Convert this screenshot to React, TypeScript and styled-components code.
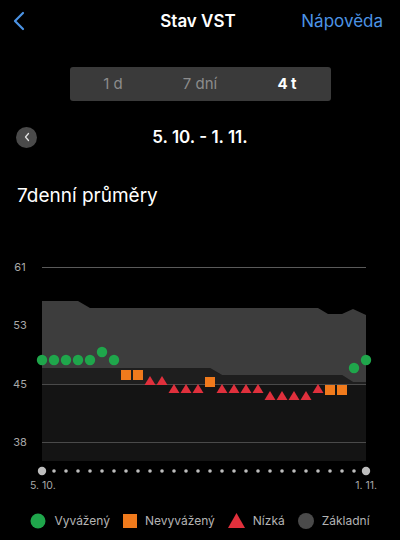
import React from "react";
import styled, { createGlobalStyle } from "styled-components";

const Global = createGlobalStyle`
  html, body { margin: 0; padding: 0; background: #000; }
  body { font-family: Inter, "Open Sans", "Liberation Sans", sans-serif; color: #fff; }
  * { box-sizing: border-box; }
`;

const Page = styled.div`
  width: 400px;
  height: 540px;
  background: #000;
  display: flex;
  flex-direction: column;
  overflow: hidden;
`;

const Header = styled.div`
  height: 44px;
  display: grid;
  grid-template-columns: 90px 1fr 90px;
  align-items: center;
  padding: 0 17px 0 13px;
`;

const BackBtn = styled.div`
  display: flex;
  align-items: center;
`;

const HeaderTitle = styled.div`
  text-align: center;
  font-size: 17px;
  font-weight: 600;
  color: #fff;
`;

const HelpLink = styled.div`
  text-align: right;
  font-size: 17px;
  color: #4c94e6;
  white-space: nowrap;
`;

const SegWrap = styled.div`
  margin-top: 24px;
  display: flex;
  justify-content: center;
`;

const Segmented = styled.div`
  width: 261px;
  height: 34px;
  background: #3a3a3a;
  border-radius: 3px;
  display: grid;
  grid-template-columns: repeat(3, 1fr);
  align-items: center;
`;

const Seg = styled.div<{ $active?: boolean }>`
  text-align: center;
  font-size: 15px;
  font-weight: ${(p) => (p.$active ? 700 : 400)};
  color: ${(p) => (p.$active ? "#fff" : "#8c8c8c")};
`;

const DateRow = styled.div`
  margin-top: 26px;
  height: 21px;
  display: grid;
  grid-template-columns: 21px 1fr 21px;
  align-items: center;
  padding: 0 16px;
`;

const RoundBtn = styled.div`
  width: 21px;
  height: 21px;
  border-radius: 50%;
  background: #4a4a4a;
  display: flex;
  align-items: center;
  justify-content: center;
`;

const DateText = styled.div`
  text-align: center;
  font-size: 17px;
  font-weight: 600;
  color: #fff;
`;

const SectionTitle = styled.div`
  margin-top: 35px;
  padding-left: 17px;
  font-size: 19px;
  line-height: 25px;
  color: #fff;
`;

const ChartBox = styled.div`
  margin-top: 41px;
  height: 250px;
`;

const Legend = styled.div`
  height: 42px;
  padding-top: 3px;
  display: flex;
  align-items: center;
  justify-content: center;
  gap: 13px;
`;

const LegendItem = styled.div`
  display: flex;
  align-items: center;
  gap: 8px;
  font-size: 12px;
  color: #b4b4b4;
`;

const GREEN = "#1fa64b";
const ORANGE = "#f07a1c";
const RED = "#e0303c";
const OFF = 250;

type Kind = "g" | "o" | "t";
const points: [Kind, number][] = [
  ["g", 361], ["g", 361], ["g", 361], ["g", 361], ["g", 361], ["g", 353], ["g", 361],
  ["o", 376], ["o", 376], ["t", 382], ["t", 382], ["t", 390], ["t", 390], ["t", 390],
  ["o", 383], ["t", 390], ["t", 390], ["t", 390], ["t", 390], ["t", 397], ["t", 397],
  ["t", 397], ["t", 397], ["t", 390], ["o", 391], ["o", 391], ["g", 369], ["g", 361],
];

const y = (v: number) => v - OFF;

const topEdge = [[42, 302], [78, 302], [90, 309], [318, 309], [328, 315], [342, 315], [353, 310], [366, 316]];
const bottomEdge = [[366, 383], [353, 383], [342, 376], [222, 376], [210, 369], [42, 369]];

const pts = (a: number[][]) => a.map(([px, py]) => `${px},${y(py)}`).join(" ");

const Marker: React.FC<{ kind: Kind; x: number; cy: number }> = ({ kind, x, cy }) => {
  if (kind === "g") return <circle cx={x} cy={cy} r={5.2} fill={GREEN} />;
  if (kind === "o") return <rect x={x - 5} y={cy - 5} width={10} height={10} fill={ORANGE} />;
  return <polygon points={`${x},${cy - 5} ${x + 5.5},${cy + 4} ${x - 5.5},${cy + 4}`} fill={RED} />;
};

const Chart: React.FC = () => {
  const axisLabels: [string, number][] = [["61", 268], ["53", 326], ["45", 385], ["38", 443]];
  return (
    <svg width={400} height={250} viewBox="0 0 400 250">
      <polygon points={`${pts(bottomEdge)} 42,${y(462)} 366,${y(462)}`} fill="#141414" />
      <polygon points={`${pts(bottomEdge)} 42,${y(385)} 366,${y(385)}`} fill="#1e1e1e" />
      <line x1={42} x2={366} y1={y(268) + 0.5} y2={y(268) + 0.5} stroke="#5a5a5a" strokeWidth={1} />
      <line x1={42} x2={366} y1={y(385) + 0.5} y2={y(385) + 0.5} stroke="#4a4a4a" strokeWidth={1} />
      <line x1={42} x2={366} y1={y(443) + 0.5} y2={y(443) + 0.5} stroke="#4a4a4a" strokeWidth={1} />
      <polygon points={`${pts(topEdge)} ${pts(bottomEdge)}`} fill="#3d3d3d" />
      {axisLabels.map(([t, py]) => (
        <text key={t} x={20} y={y(py) + 4} fill="#a8a8a8" fontSize={11} textAnchor="middle"
          fontFamily="Inter, 'Liberation Sans', sans-serif">{t}</text>
      ))}
      {points.map(([k, py], i) => (
        <Marker key={i} kind={k} x={42 + 12 * i} cy={y(py)} />
      ))}
      {Array.from({ length: 28 }).map((_, i) => {
        const big = i === 0 || i === 27;
        return <circle key={i} cx={42 + 12 * i} cy={y(472)} r={big ? 4.2 : 1.8} fill="#bdbdbd" />;
      })}
      <text x={30} y={y(490)} fill="#a8a8a8" fontSize={10.5} fontFamily="Inter, 'Liberation Sans', sans-serif">5. 10.</text>
      <text x={377} y={y(490)} fill="#a8a8a8" fontSize={10.5} textAnchor="end" fontFamily="Inter, 'Liberation Sans', sans-serif">1. 11.</text>
    </svg>
  );
};

export default function App() {
  return (
    <Page>
      <Global />
      <Header>
        <BackBtn>
          <svg width="12" height="20" viewBox="0 0 12 20">
            <path d="M10 2 L2 10 L10 18" fill="none" stroke="#4c94e6" strokeWidth="2.2" strokeLinecap="round" strokeLinejoin="round" />
          </svg>
        </BackBtn>
        <HeaderTitle>Stav VST</HeaderTitle>
        <HelpLink>Nápověda</HelpLink>
      </Header>
      <SegWrap>
        <Segmented>
          <Seg>1 d</Seg>
          <Seg>7 dní</Seg>
          <Seg $active>4 t</Seg>
        </Segmented>
      </SegWrap>
      <DateRow>
        <RoundBtn>
          <svg width="8" height="10" viewBox="0 0 8 10">
            <path d="M5.5 1.5 L2.5 5 L5.5 8.5" fill="none" stroke="#e0e0e0" strokeWidth="1.3" strokeLinecap="round" strokeLinejoin="round" />
          </svg>
        </RoundBtn>
        <DateText>5. 10. - 1. 11.</DateText>
        <span />
      </DateRow>
      <SectionTitle>7denní průměry</SectionTitle>
      <ChartBox>
        <Chart />
      </ChartBox>
      <Legend>
        <LegendItem>
          <svg width="16" height="16"><circle cx="8" cy="8" r="7.5" fill={GREEN} /></svg>
          Vyvážený
        </LegendItem>
        <LegendItem>
          <svg width="14" height="14"><rect width="14" height="14" fill={ORANGE} /></svg>
          Nevyvážený
        </LegendItem>
        <LegendItem>
          <svg width="17" height="15"><polygon points="8.5,0 17,15 0,15" fill={RED} /></svg>
          Nízká
        </LegendItem>
        <LegendItem>
          <svg width="16" height="16"><circle cx="8" cy="8" r="8" fill="#4a4a4a" /></svg>
          Základní
        </LegendItem>
      </Legend>
    </Page>
  );
}
